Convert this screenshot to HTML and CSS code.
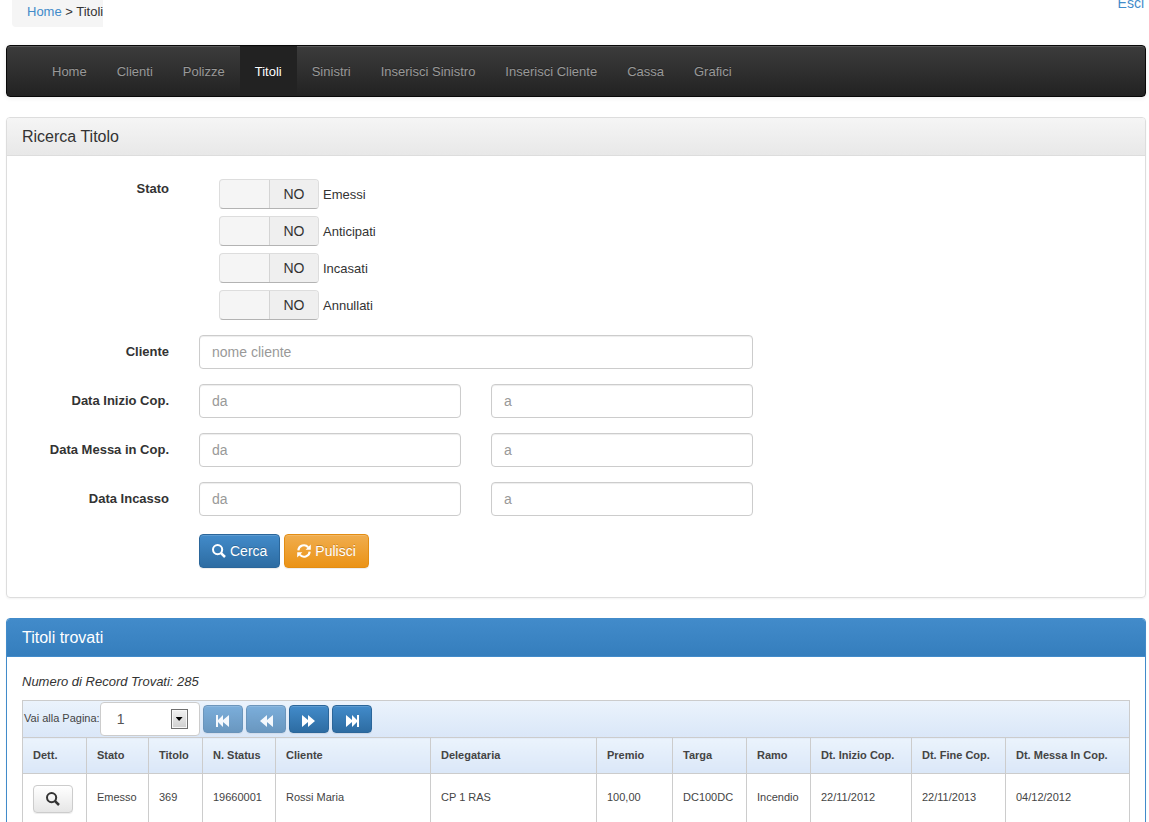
FILE: index.html
```html
<!DOCTYPE html>
<html lang="it">
<head>
<meta charset="utf-8">
<title>Ricerca Titolo</title>
<link rel="stylesheet" href="styles.css">
</head>
<body>
<svg class="sprite" aria-hidden="true">
  <symbol id="i-search" viewBox="0 0 14 14"><circle cx="5.6" cy="5.6" r="4.6" fill="none" stroke="currentColor" stroke-width="2"/><path d="M8.8 8.8l4.2 4.2" stroke="currentColor" stroke-width="2.5"/></symbol>
  <symbol id="i-refresh" viewBox="0 0 14 14"><path d="M1.3 6.4A5.6 5.6 0 0 1 11.2 3.4M12.7 7.6A5.6 5.6 0 0 1 2.8 10.6" fill="none" stroke="currentColor" stroke-width="2.1"/><path d="M13.8.6v5.2H8.6zM.2 13.4V8.2h5.2z" fill="currentColor"/></symbol>
  <symbol id="i-first" viewBox="0 0 16 12"><path d="M1 0h2v5l5-5v5l6-5v12L8 7v5L3 7v5H1z" fill="currentColor"/></symbol>
  <symbol id="i-prev" viewBox="0 0 16 12"><path d="M2 6l7-6v5l6-5v12L9 7v5z" fill="currentColor"/></symbol>
</svg>
<header class="top">
  <div class="crumbs"><a href="#">Home</a> &gt; Titoli</div>
  <a class="logout" href="#">Esci</a>
</header>
<nav class="navbar">
  <a href="#">Home</a>
  <a href="#">Clienti</a>
  <a href="#">Polizze</a>
  <a href="#" class="active">Titoli</a>
  <a href="#">Sinistri</a>
  <a href="#">Inserisci Sinistro</a>
  <a href="#">Inserisci Cliente</a>
  <a href="#">Cassa</a>
  <a href="#">Grafici</a>
</nav>
<section class="panel">
  <h2 class="panel-head">Ricerca Titolo</h2>
  <form class="form">
    <div class="row row-state">
      <span class="name">Stato</span>
      <div class="switches">
        <label class="switch"><input type="checkbox"><span class="track"><span class="off">NO</span></span><span class="caption">Emessi</span></label>
        <label class="switch"><input type="checkbox"><span class="track"><span class="off">NO</span></span><span class="caption">Anticipati</span></label>
        <label class="switch"><input type="checkbox"><span class="track"><span class="off">NO</span></span><span class="caption">Incasati</span></label>
        <label class="switch"><input type="checkbox"><span class="track"><span class="off">NO</span></span><span class="caption">Annullati</span></label>
      </div>
    </div>
    <div class="row">
      <label class="name" for="cliente">Cliente</label>
      <div class="fields"><input class="text" id="cliente" type="text" placeholder="nome cliente"></div>
    </div>
    <div class="row">
      <label class="name" for="inizio">Data Inizio Cop.</label>
      <div class="fields"><input class="text" id="inizio" type="text" placeholder="da"><input class="text" type="text" placeholder="a" aria-label="Data Inizio Cop. a"></div>
    </div>
    <div class="row">
      <label class="name" for="messa">Data Messa in Cop.</label>
      <div class="fields"><input class="text" id="messa" type="text" placeholder="da"><input class="text" type="text" placeholder="a" aria-label="Data Messa in Cop. a"></div>
    </div>
    <div class="row">
      <label class="name" for="incasso">Data Incasso</label>
      <div class="fields"><input class="text" id="incasso" type="text" placeholder="da"><input class="text" type="text" placeholder="a" aria-label="Data Incasso a"></div>
    </div>
    <div class="row row-actions">
      <div class="actions">
        <button type="button" class="btn primary"><svg class="icon"><use href="#i-search"/></svg>Cerca</button>
        <button type="button" class="btn warning"><svg class="icon"><use href="#i-refresh"/></svg>Pulisci</button>
      </div>
    </div>
  </form>
</section>
<section class="panel results">
  <h2 class="panel-head">Titoli trovati</h2>
  <div class="results-body">
    <p class="count">Numero di Record Trovati: 285</p>
    <div class="pager">
      <label for="pagina">Vai alla Pagina:</label>
      <span class="select"><select id="pagina"><option>1</option><option>2</option></select><span class="arrow"></span></span>
      <button type="button" class="btn primary small" disabled aria-label="Prima"><svg class="step"><use href="#i-first"/></svg></button>
      <button type="button" class="btn primary small" disabled aria-label="Precedente"><svg class="step"><use href="#i-prev"/></svg></button>
      <button type="button" class="btn primary small" aria-label="Successiva"><svg class="step flip"><use href="#i-prev"/></svg></button>
      <button type="button" class="btn primary small" aria-label="Ultima"><svg class="step flip"><use href="#i-first"/></svg></button>
    </div>
    <table class="grid">
      <colgroup><col class="c-dett"><col class="c-stato"><col class="c-titolo"><col class="c-status"><col class="c-cliente"><col class="c-deleg"><col class="c-premio"><col class="c-targa"><col class="c-ramo"><col class="c-inizio"><col class="c-fine"><col class="c-messa"></colgroup>
      <thead><tr><th>Dett.</th><th>Stato</th><th>Titolo</th><th>N. Status</th><th>Cliente</th><th>Delegataria</th><th>Premio</th><th>Targa</th><th>Ramo</th><th>Dt. Inizio Cop.</th><th>Dt. Fine Cop.</th><th>Dt. Messa In Cop.</th></tr></thead>
      <tbody><tr><td class="detail"><button type="button" class="btn plain small" aria-label="Dettaglio"><svg class="icon"><use href="#i-search"/></svg></button></td><td>Emesso</td><td>369</td><td>19660001</td><td>Rossi Maria</td><td>CP 1 RAS</td><td>100,00</td><td>DC100DC</td><td>Incendio</td><td>22/11/2012</td><td>22/11/2013</td><td>04/12/2012</td></tr></tbody>
    </table>
  </div>
</section>
</body>
</html>
```
FILE: styles.css
```css
* { box-sizing: border-box; }
html { overflow: hidden; }
body {
  margin: 0;
  padding: 0 3px 0 6px;
  font: 13px/20px "Liberation Sans", Arial, sans-serif;
  color: #333;
  background: #fff;
}
a { color: #428bca; text-decoration: none; }
.sprite { display: none; }

.top { display: flex; justify-content: space-between; align-items: flex-start; height: 45px; padding: 0 2px 0 6px; }
.crumbs { height: 27px; padding: 2px 0 0 15px; background: #f5f5f5; border-radius: 0 0 0 4px; }
.logout { margin-top: -7px; font-size: 14px; }

.navbar {
  display: flex;
  margin-bottom: 20px;
  padding: 0 30px;
  border: 1px solid #080808;
  border-radius: 4px;
  background: linear-gradient(#3c3c3c, #222);
  box-shadow: inset 0 1px 0 rgba(255,255,255,.15), 0 1px 5px rgba(0,0,0,.08);
}
.navbar a { padding: 16px 15px 14px; color: #999; text-shadow: 0 -1px 0 rgba(0,0,0,.25); }
.navbar .active { color: #fff; background: #222; }

.panel { margin-bottom: 20px; border: 1px solid #ddd; border-radius: 4px; box-shadow: 0 1px 2px rgba(0,0,0,.05); }
.panel-head {
  margin: 0;
  padding: 10px 15px;
  font-size: 16px;
  line-height: 17px;
  font-weight: normal;
  border-bottom: 1px solid #ddd;
  border-radius: 3px 3px 0 0;
  background: linear-gradient(#f5f5f5, #e8e8e8);
}
.form { display: flex; flex-direction: column; gap: 15px; padding: 23px 15px 29px; }
.row { display: grid; grid-template-columns: 147fr 554fr 347fr; column-gap: 30px; }
.name { padding-top: 7px; font-weight: bold; text-align: right; }
.row-state .name { padding-top: 0; }
.switches { display: flex; flex-direction: column; gap: 7px; align-items: flex-start; padding-left: 20px; }
.switch { position: relative; display: flex; align-items: center; gap: 4px; }
.switch input { position: absolute; inset: 0; width: 100%; height: 100%; margin: 0; opacity: 0; }
.caption { padding-top: 2px; }
.track { display: flex; justify-content: flex-end; width: 100px; height: 30px; border: 1px solid #ddd; border-bottom-color: #b3b3b3; border-radius: 4px; background: #f5f5f5; overflow: hidden; }
.off { width: 49px; border-left: 1px solid #d4d4d4; background: #efefef; font-size: 14px; line-height: 28px; text-align: center; }
.fields { display: flex; gap: 30px; }
.text {
  flex: 1;
  min-width: 0;
  height: 34px;
  padding: 6px 12px;
  border: 1px solid #ccc;
  border-radius: 4px;
  font: 14px/20px "Liberation Sans", Arial, sans-serif;
  color: #555;
  box-shadow: inset 0 1px 1px rgba(0,0,0,.075);
}
.text::placeholder { color: #999; opacity: 1; }
.row-actions { padding-top: 3px; }
.actions { grid-column: 2; display: flex; gap: 4px; }
.btn {
  display: inline-flex;
  align-items: center;
  justify-content: center;
  gap: 4px;
  height: 34px;
  padding: 0 12px;
  border: 1px solid;
  border-radius: 4px;
  font: 14px/20px "Liberation Sans", Arial, sans-serif;
  color: #fff;
  box-shadow: inset 0 1px 0 rgba(255,255,255,.15), 0 1px 1px rgba(0,0,0,.075);
}
.primary { border-color: #2b669a; background: linear-gradient(#428bca, #2d6ca2); text-shadow: 0 -1px 0 rgba(0,0,0,.2); }
.warning { border-color: #e38d13; background: linear-gradient(#f0ad4e, #eb9316); text-shadow: 0 -1px 0 rgba(0,0,0,.2); }
.plain { border-color: #ccc; background: linear-gradient(#fff, #e6e6e6); color: #333; }
.btn:disabled { opacity: .65; }
.small { width: 40px; height: 28px; padding: 0; }
.icon { width: 14px; height: 14px; }
.step { width: 16px; height: 12px; margin-top: 4px; }
.flip { transform: scaleX(-1); }

.results { border-color: #428bca; }
.results .panel-head { color: #fff; border-color: #428bca; background: linear-gradient(#428bca, #357ebd); }
.results-body { padding: 15px; color: #444; }
.count { margin: 0 0 8px; font-style: italic; color: #333; }
.pager {
  display: flex;
  align-items: center;
  height: 37px;
  padding: 0 1px;
  border: 1px solid #ccc;
  border-bottom: 0;
  background: linear-gradient(#ebf3fc, #dae7f8);
  font-size: 11px;
}
.pager label { padding-bottom: 2px; }
.pager .btn { margin-left: 3px; }
.select { position: relative; display: block; width: 100px; height: 34px; }
.select select {
  width: 100%;
  height: 34px;
  padding: 0 16px;
  border: 1px solid #ccc;
  border-radius: 4px;
  appearance: none;
  background: #fff;
  font: 14px/20px "Liberation Sans", Arial, sans-serif;
  color: #555;
}
.arrow { position: absolute; right: 12px; top: 7px; width: 17px; height: 20px; border: 1px solid #707070; background: linear-gradient(#f2f2f2, #cfcfcf); box-shadow: inset 0 0 0 1px #f8f8f8; pointer-events: none; }
.arrow::after { content: ""; display: block; margin: 7px auto 0; width: 7px; height: 4px; background: #000; clip-path: polygon(0 0, 100% 0, 50% 100%); }
.grid { width: 100%; table-layout: fixed; border-collapse: collapse; font-size: 11px; line-height: 16px; }
.grid th, .grid td { padding: 0 10px 2px; border: 1px solid #ccc; text-align: left; white-space: nowrap; }
.grid th { height: 36px; background: linear-gradient(#ebf3fc, #dae7f8); }
.grid td { height: 51px; padding-bottom: 4px; }
.grid .detail { padding-bottom: 0; }
.grid .btn { display: flex; }
.c-dett { width: 64px; }
.c-stato { width: 62px; }
.c-titolo { width: 54px; }
.c-status { width: 73px; }
.c-cliente { width: 155px; }
.c-deleg { width: 166px; }
.c-premio { width: 76px; }
.c-targa { width: 74px; }
.c-ramo { width: 64px; }
.c-inizio { width: 101px; }
.c-fine { width: 94px; }
.c-messa { width: 124px; }
```
